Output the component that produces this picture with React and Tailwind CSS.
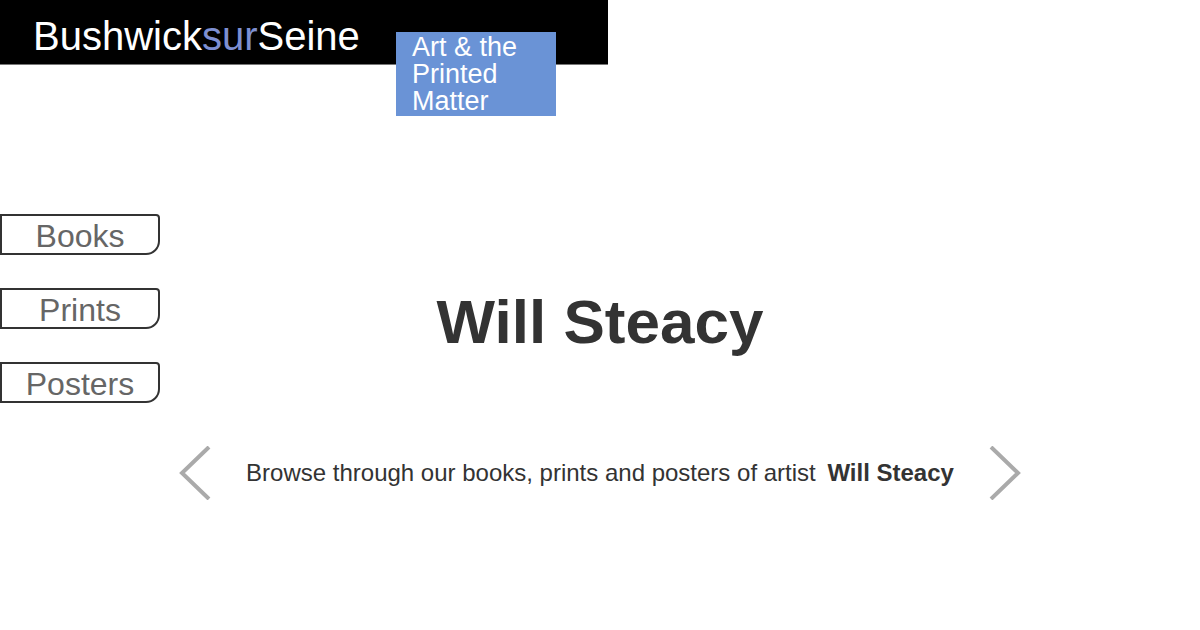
import React from 'react';

const Chevron = ({ dir }) => (
  <svg width="32" height="54" viewBox="0 0 32 54" className="shrink-0">
    <polyline
      points={dir === 'left' ? '30,1 3,27 30,53' : '2,1 29,27 2,53'}
      fill="none"
      stroke="#aaaaaa"
      strokeWidth="4"
    />
  </svg>
);

const NavTab = ({ label }) => (
  <button className="w-[160px] h-[41px] border-2 border-[#333] rounded-tr-[4px] rounded-br-[14px] bg-white text-[#666] text-[32px] leading-[34px] pt-[3px] text-center">
    {label}
  </button>
);

export default function App() {
  return (
    <div className="relative w-[1200px] h-[630px] bg-white overflow-hidden font-['Liberation_Sans',Arial,sans-serif]">
      <header className="w-[608px] h-[65px] bg-black border-b border-[#777] pl-[33px] pt-[13px]">
        <div className="text-[40px] leading-[46px] text-white">
          Bushwick<span className="text-[#7d8fd2]">sur</span>Seine
        </div>
      </header>

      <div className="absolute left-[396px] top-[32px] w-[160px] h-[84px] bg-[#6a93d6] pl-[16px] pt-[2px] text-white text-[27px] leading-[27px]">
        Art &amp; the
        <br />
        Printed
        <br />
        Matter
      </div>

      <div className="grid grid-cols-[160px_1fr_160px]">
        <nav className="flex flex-col gap-[33px] pt-[149px]">
          <NavTab label="Books" />
          <NavTab label="Prints" />
          <NavTab label="Posters" />
        </nav>

        <main className="flex flex-col items-center pt-[221px]">
          <h1 className="text-[62px] font-bold leading-[71px] text-[#333]">Will Steacy</h1>
          <div className="mt-[89px] flex items-center gap-[35px]">
            <Chevron dir="left" />
            <p className="text-[24px] text-[#333] whitespace-nowrap">
              Browse through our books, prints and posters of artist{' '}
              <strong className="ml-[5px] font-bold">Will Steacy</strong>
            </p>
            <Chevron dir="right" />
          </div>
        </main>

        <div />
      </div>
    </div>
  );
}
